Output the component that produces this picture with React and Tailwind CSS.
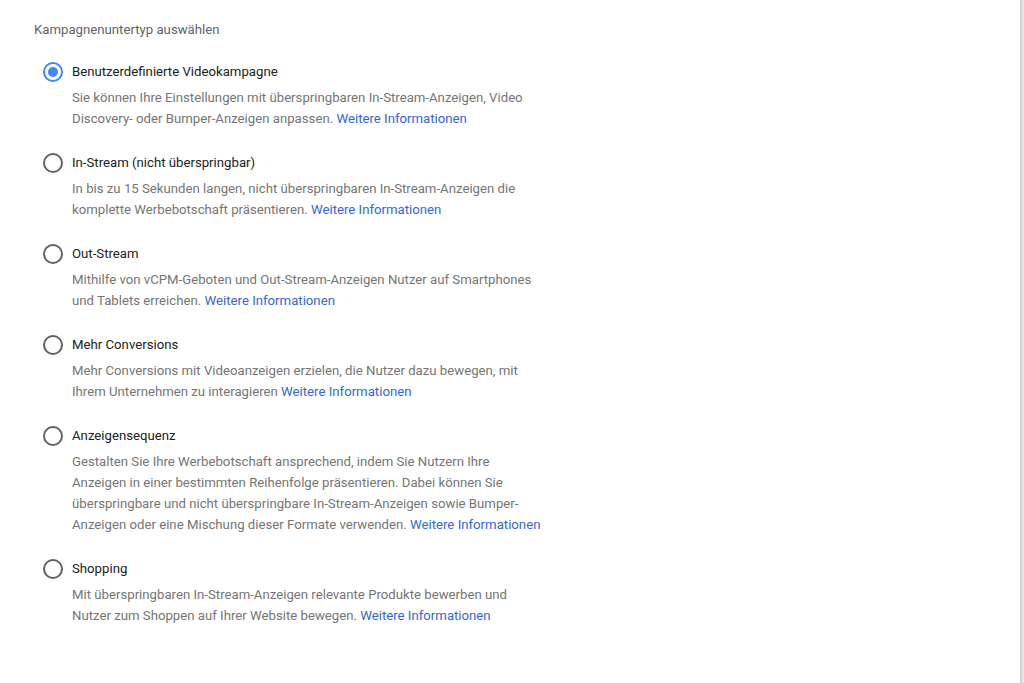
import { useState } from "react";

const options = [
  {
    label: "Benutzerdefinierte Videokampagne",
    desc: "Sie können Ihre Einstellungen mit überspringbaren In-Stream-Anzeigen, Video Discovery- oder Bumper-Anzeigen anpassen.",
  },
  {
    label: "In-Stream (nicht überspringbar)",
    desc: "In bis zu 15 Sekunden langen, nicht überspringbaren In-Stream-Anzeigen die komplette Werbebotschaft präsentieren.",
  },
  {
    label: "Out-Stream",
    desc: "Mithilfe von vCPM-Geboten und Out-Stream-Anzeigen Nutzer auf Smartphones und Tablets erreichen.",
  },
  {
    label: "Mehr Conversions",
    desc: "Mehr Conversions mit Videoanzeigen erzielen, die Nutzer dazu bewegen, mit Ihrem Unternehmen zu interagieren",
  },
  {
    label: "Anzeigensequenz",
    desc: "Gestalten Sie Ihre Werbebotschaft ansprechend, indem Sie Nutzern Ihre Anzeigen in einer bestimmten Reihenfolge präsentieren. Dabei können Sie überspringbare und nicht überspringbare In-Stream-Anzeigen sowie Bumper-Anzeigen oder eine Mischung dieser Formate verwenden.",
  },
  {
    label: "Shopping",
    desc: "Mit überspringbaren In-Stream-Anzeigen relevante Produkte bewerben und Nutzer zum Shoppen auf Ihrer Website bewegen.",
  },
];

function Radio({ checked }) {
  return (
    <span
      className={
        checked
          ? "flex items-center justify-center w-[20px] h-[20px] rounded-full border-2 border-[#4285f4] shrink-0"
          : "flex items-center justify-center w-[20px] h-[20px] rounded-full border-2 border-[#5f6368] shrink-0"
      }
    >
      {checked ? <span className="w-[10px] h-[10px] rounded-full bg-[#4285f4]"></span> : null}
    </span>
  );
}

export default function App() {
  const [selected, setSelected] = useState(0);

  return (
    <div className="flex w-full h-[683px] bg-white font-['Roboto',sans-serif]">
      <div className="flex-1 pl-[34px] pt-[20px]">
        <h3 className="text-[13.2px] leading-[20px] text-[#5f6368]">
          Kampagnenuntertyp auswählen
        </h3>
        <div className="flex flex-col gap-[24px] mt-[22px] pl-[9px]">
          {options.map((o, i) => (
            <div key={o.label} className="flex gap-[9px] cursor-pointer" onClick={() => setSelected(i)}>
              <Radio checked={selected === i} />
              <div>
                <div className="text-[13.2px] leading-[20px] text-[#212121]">{o.label}</div>
                <p className="mt-[5px] w-[470px] text-[13.2px] leading-[21px] text-[#757575]">
                  {o.desc}{" "}
                  <a className="text-[#3367d6]" href="#">
                    Weitere Informationen
                  </a>
                </p>
              </div>
            </div>
          ))}
        </div>
      </div>
      <div className="w-[4px] bg-gradient-to-r from-[#cfcfcf] to-[#ececec]"></div>
    </div>
  );
}
